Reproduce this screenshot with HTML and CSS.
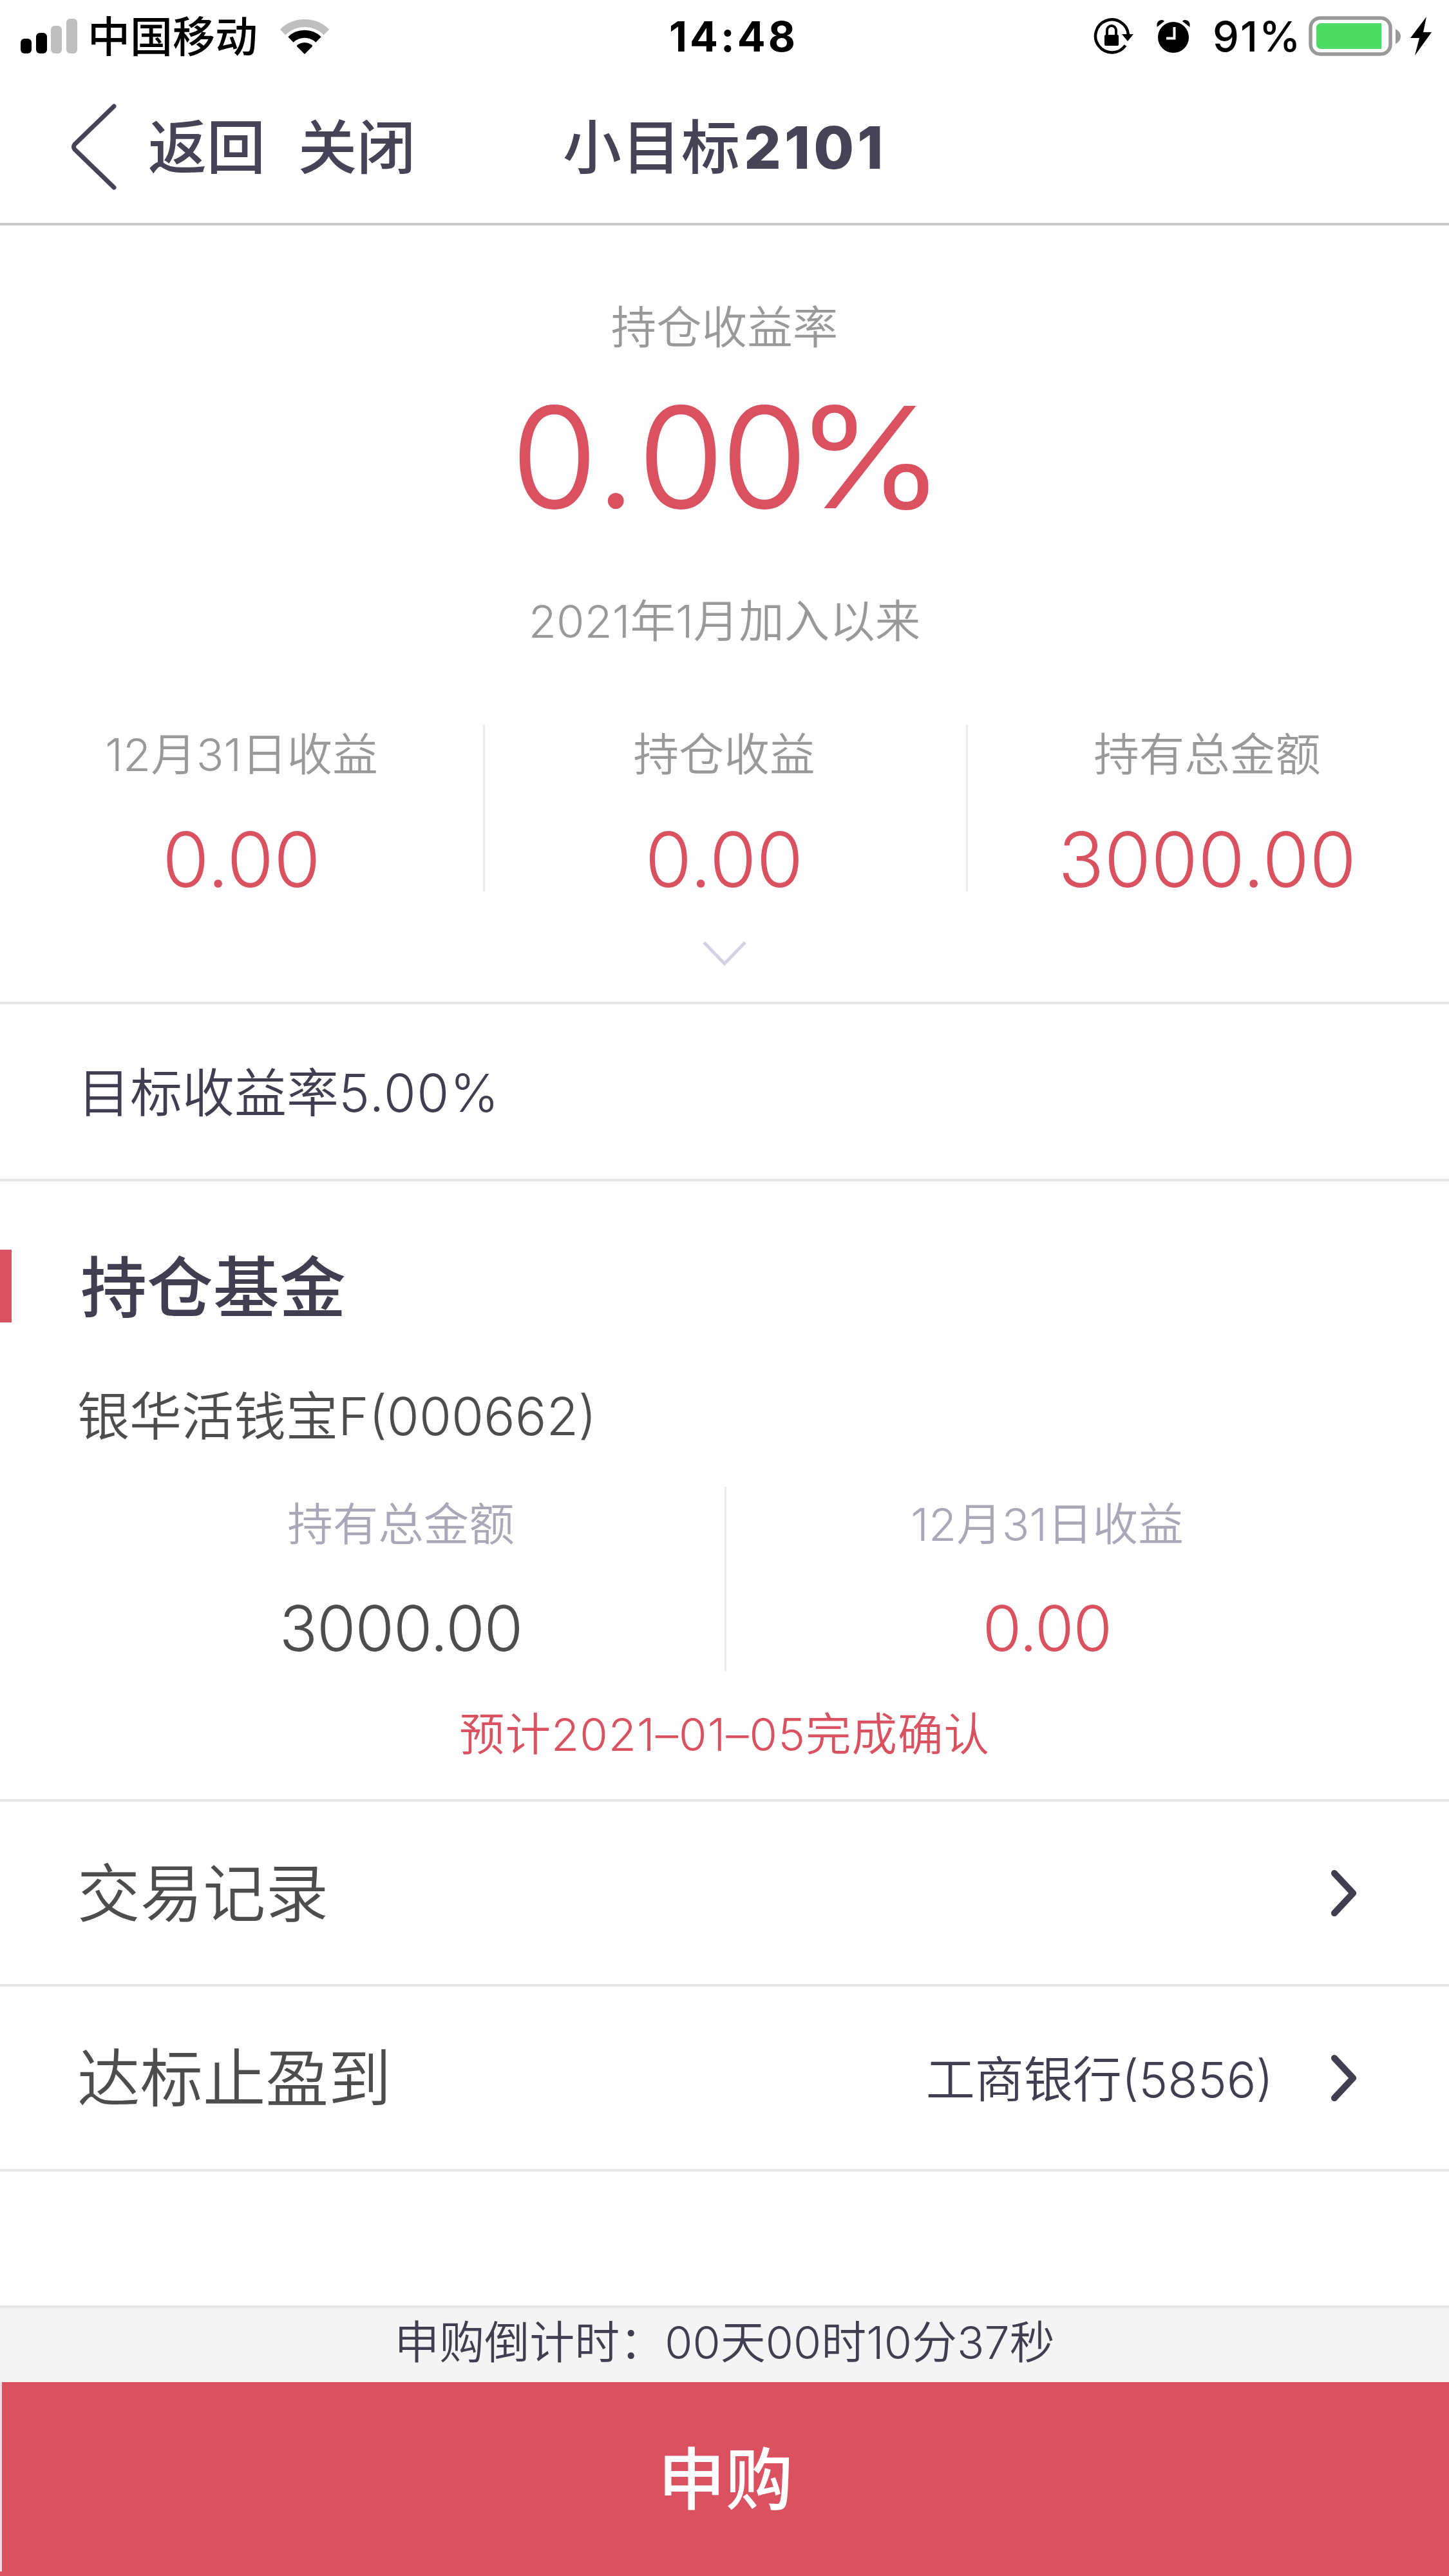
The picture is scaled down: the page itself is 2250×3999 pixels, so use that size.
FILE: index.html
```html
<!DOCTYPE html>
<html lang="zh-CN">
<head>
<meta charset="utf-8">
<title>小目标2101</title>
<link rel="stylesheet" href="styles.css">
</head>

<body>
<div class="page">
	<div class="status-bar">
		<svg class="signal" width="88" height="54" viewBox="0 0 88 54">
			<rect x="0" y="31" width="17" height="23" rx="6"/>
			<rect x="24" y="22" width="17" height="32" rx="6"/>
			<rect x="47" y="11" width="17" height="43" rx="6" fill="#bfbfbf"/>
			<rect x="71" y="0" width="17" height="54" rx="6" fill="#bfbfbf"/>
		</svg>
		<span class="carrier">中国移动</span>
		<svg class="wifi" width="78" height="55" viewBox="0 0 78 55">
			<path d="M5 21A48.500 48.500 0 0 1 73 21" fill="none" stroke="#bfbfbf" stroke-width="12"/>
			<path d="M17.500 32.500A31 31 0 0 1 60.500 32.500" fill="none" stroke="#000" stroke-width="12"/>
			<path d="M39 55L27 43Q26.500 41 29 40A18 18 0 0 1 49 40Q51.500 41 51 43Z"/>
		</svg>
		<span class="time">14:48</span>
		<svg class="lock" width="64" height="56" viewBox="0 0 64 56">
			<path d="M49.500 42.500A25.500 25.500 0 1 1 54 26" fill="none" stroke="#000" stroke-width="4.500"/>
			<path d="M44 25H62L53 36Z"/>
			<rect x="17" y="26" width="22" height="17" rx="2"/>
			<path d="M21 28V19A7 7 0 0 1 35 19V28" fill="none" stroke="#000" stroke-width="4"/>
		</svg>
		<svg class="alarm" width="52" height="53" viewBox="0 0 52 53">
			<circle cx="26" cy="28" r="24"/>
			<path d="M0.500 12V7Q2 1 8 1Q11 1 12 3ZM51.500 12V7Q50 1 44 1Q41 1 40 3Z"/>
			<path d="M27.500 12V29.500H15" fill="none" stroke="#fff" stroke-width="4"/>
		</svg>
		<span class="percent">91%</span>
		<svg class="battery" width="144" height="62" viewBox="0 0 144 62">
			<rect x="3" y="3" width="124" height="56" rx="15" fill="none" stroke="#999" stroke-width="5.500"/>
			<path d="M20 11H113V51H20Q12 51 12 43V19Q12 11 20 11Z" fill="#4cd964"/>
			<path d="M135 20Q143 24 143 31.500Q143 39 135 43Z" fill="#999"/>
		</svg>
		<svg class="bolt" width="34" height="60" viewBox="0 0 34 60">
			<path d="M25 0L0 33H14L7 60L33 24H20Z"/>
		</svg>
	</div>

	<div class="nav">
		<svg class="back" width="76" height="140" viewBox="0 0 76 140">
			<path d="M69 7L8 66Q5 70 8 74L69 133" fill="none" stroke="#454355" stroke-width="7" stroke-linecap="round"/>
		</svg>
		<a class="nav-link">返回</a>
		<a class="nav-link close">关闭</a>
		<h1 class="title">小目标<span>2101</span></h1>
	</div>

	<div class="summary">
		<p class="label">持仓收益率</p>
		<p class="rate"><i>0.</i>00<span>%</span></p>
		<p class="label since">2021年1月加入以来</p>
		<ul class="stats">
			<li><span class="label">12月31日收益</span><b>0.00</b></li>
			<li><span class="label">持仓收益</span><b>0.00</b></li>
			<li><span class="label">持有总金额</span><b>3000.00</b></li>
		</ul>
		<svg class="more" width="70" height="42" viewBox="0 0 70 42">
			<path d="M3 3L35 36L67 3" fill="none" stroke="#d2d2e4" stroke-width="5"/>
		</svg>
	</div>

	<div class="target">目标收益率<span>5.00%</span></div>

	<div class="fund">
		<h2 class="fund-title">持仓基金</h2>
		<p class="fund-name">银华活钱宝F(000662)</p>
		<ul class="fund-data">
			<li><span>持有总金额</span><b>3000.00</b></li>
			<li><span>12月31日收益</span><b class="red">0.00</b></li>
		</ul>
		<p class="confirm">预计2021–01–05完成确认</p>
	</div>

	<div class="row">
		<span class="row-name">交易记录</span>
		<svg class="arrow" width="42" height="74" viewBox="0 0 42 74">
			<path d="M6 6L35 37L6 68" fill="none" stroke="#403e50" stroke-width="10" stroke-linecap="round" stroke-linejoin="round"/>
		</svg>
	</div>
	<div class="row">
		<span class="row-name">达标止盈到</span>
		<span class="bank">工商银行(5856)</span>
		<svg class="arrow" width="42" height="74" viewBox="0 0 42 74">
			<path d="M6 6L35 37L6 68" fill="none" stroke="#403e50" stroke-width="10" stroke-linecap="round" stroke-linejoin="round"/>
		</svg>
	</div>

	<div class="footer">
		<div class="countdown">申购倒计时：00天00时10分37秒</div>
		<div class="buy-wrap"><a class="buy">申购</a></div>
	</div>
</div>
</body>
</html>
```
FILE: styles.css
```css
*{
	margin:0;
	padding:0;
	box-sizing:border-box;
}
body{
	background:#fefefe;
	font-family:Inter, "Noto Sans CJK SC", sans-serif;
	font-weight:350;
	color:#403e50;
}
ul{
	list-style:none;
}
svg{
	display:block;
	flex:none;
}
.page{
	width:2250px;
	height:3999px;
	display:flex;
	flex-direction:column;
	overflow:hidden;
	white-space:nowrap;
}

/* 状态栏 */
.status-bar{
	height:112px;
	display:flex;
	align-items:center;
	padding-left:32px;
	line-height:80px;
	color:#000;
}
.carrier{
	width:266px;
	margin-left:16px;
	padding-top:2px;
	font-size:66px;
	font-weight:500;
}
.wifi{
	margin-left:32px;
}
.time{
	width:210px;
	margin-left:527px;
	padding-top:1px;
	font-size:65px;
	font-weight:700;
	letter-spacing:4px;
}
.lock{
	margin-left:449px;
}
.alarm{
	margin-left:34px;
}
.percent{
	width:140px;
	margin-left:35px;
	padding-top:1px;
	font-size:65px;
	font-weight:500;
	letter-spacing:2px;
}
.battery{
	margin-left:9px;
}
.bolt{
	margin-left:14px;
}

/* 导航 */
.nav{
	height:238px;
	display:flex;
	align-items:center;
	padding-left:108px;
	padding-bottom:3px;
	border-bottom:4px solid #c8c8c8;
	color:#454355;
}
.nav-link{
	width:182px;
	margin-left:46px;
	padding-top:3px;
	font-size:91px;
	font-weight:500;
	line-height:110px;
}
.close{
	margin-left:51px;
}
.title{
	margin-left:229px;
	padding-top:3px;
	font-size:91px;
	font-weight:500;
	line-height:110px;
	letter-spacing:1px;
}
.title span{
	margin-left:5px;
	font-weight:800;
	letter-spacing:5px;
}

/* 收益 */
.summary{
	height:1209px;
	padding-top:114px;
	border-bottom:4px solid #e6e6e6;
	text-align:center;
}
.label{
	display:block;
	font-size:70.5px;
	line-height:90px;
	color:#999;
}
.rate{
	margin-top:36px;
	padding-right:8px;
	font-size:216px;
	font-weight:300;
	line-height:240px;
	letter-spacing:-4px;
	-webkit-text-stroke:2px #da5160;
	color:#da5160;
}
.rate i{
	font-style:normal;
	letter-spacing:4px;
}
.rate span{
	display:inline-block;
	transform:scaleX(1.14);
}
.since{
	margin-top:90px;
}
.stats{
	height:258px;
	margin-top:115px;
	display:grid;
	grid-template-columns:repeat(3, 1fr);
}
.stats li{
	padding:2px 4px 0 0;
	border-left:3px solid #ebebeb;
}
.stats li:first-child{
	padding-right:0;
	border-left:0;
}
.stats b{
	display:block;
	margin-top:67px;
	font-size:118px;
	font-weight:300;
	line-height:100px;
	color:#da5160;
}
.more{
	margin:77px auto 0;
}
.target{
	height:275px;
	padding-left:121px;
	border-bottom:4px solid #e6e6e6;
	font-size:81px;
	line-height:276px;
}
.target span{
	letter-spacing:1.5px;
}

/* 持仓基金 */
.fund{
	height:963px;
	padding-top:106px;
	border-bottom:4px solid #e6e6e6;
}
.fund-title{
	height:113px;
	border-left:18px solid #da5160;
	padding-left:107px;
	font-size:103px;
	font-weight:500;
	line-height:120px;
}
.fund-name{
	margin:96px 0 0 120px;
	font-size:81px;
	line-height:100px;
	color:#4d4d4d;
}
.fund-data{
	height:287px;
	margin:59px 120px 0;
	display:grid;
	grid-template-columns:1fr 1fr;
	text-align:center;
}
.fund-data li{
	padding-top:14px;
}
.fund-data li:last-child{
	padding-right:6px;
	border-left:3px solid #ebebeb;
}
.fund-data span{
	display:block;
	font-size:70.5px;
	line-height:90px;
	color:#a9a8b9;
}
.fund-data b{
	display:block;
	margin-top:66px;
	font-size:98px;
	font-weight:300;
	line-height:100px;
	letter-spacing:-1px;
	color:#4d4d4d;
}
.fund-data .red{
	color:#da5160;
}
.confirm{
	margin-top:53px;
	font-size:70.5px;
	line-height:90px;
	letter-spacing:1px;
	text-align:center;
	color:#da5160;
}

/* 列表 */
.row{
	height:287px;
	display:flex;
	align-items:center;
	padding:0 142px 0 120px;
	border-bottom:4px solid #e6e6e6;
	line-height:110px;
}
.row-name{
	padding-top:3px;
	font-size:97.5px;
	color:#4d4d4d;
}
.arrow{
	margin-left:auto;
}
.bank{
	margin-left:auto;
	padding-top:4px;
	font-size:76px;
}
.bank + .arrow{
	margin-left:89px;
}

/* 底部 */
.footer{
	margin-top:auto;
	background:#f4f4f4;
}
.countdown{
	height:119px;
	border-top:4px solid #e6e6e6;
	font-size:70px;
	line-height:108px;
	text-align:center;
}
.buy-wrap{
	height:301px;
	background:#da5160;
}
.buy{
	display:block;
	height:294px;
	border-left:3px solid #e9dfe1;
	font-size:105px;
	font-weight:500;
	line-height:302px;
	text-align:center;
	color:#fff;
}
```
